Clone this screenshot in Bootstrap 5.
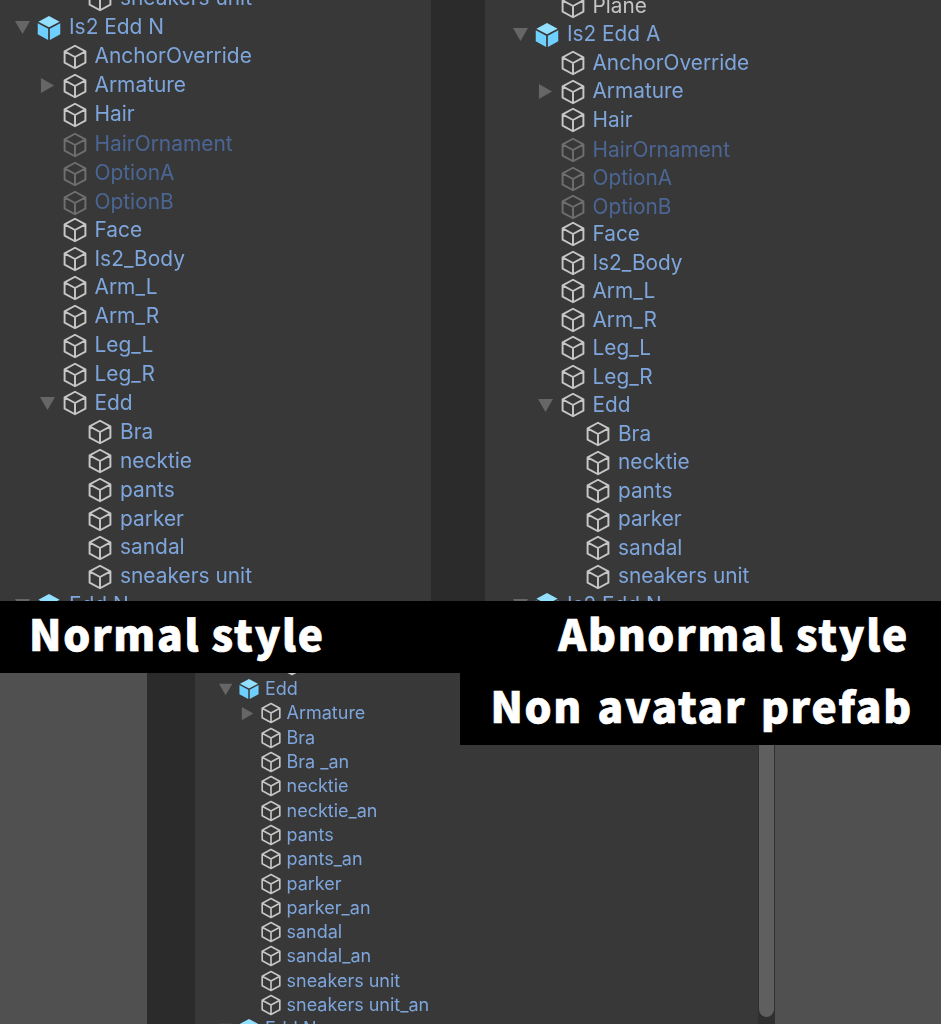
<!DOCTYPE html>
<html lang="en">
  <head>
    <meta charset="UTF-8" />
    <meta name="viewport" content="width=device-width, initial-scale=1.0" />
    <title>Hierarchy styles</title>
    <link href="https://cdn.jsdelivr.net/npm/bootstrap@5.3.0/dist/css/bootstrap.min.css" rel="stylesheet" />
    <style>
      body { background: #505050; overflow: hidden; }
      .sheet { width: 941px; height: 1024px; overflow: hidden; }
      .top-part { height: 601px; }
      .bottom-part { height: 351px; }
      .caption-band { height: 72px; background: #000; }
      .caption-text {
        font-family: "Noto Sans CJK JP", "Noto Sans", sans-serif;
        font-weight: 900; font-size: 42.5px; line-height: 64px;
        letter-spacing: 1.7px; color: #fff; white-space: nowrap;
        -webkit-text-stroke: 0.7px #fff;
      }
      .caption-left { padding-left: 29px; }
      .caption-right { padding-right: 32px; }
      .float-caption { position: absolute; top: 673px; left: 460px; width: 481px; height: 72px; background: #000; padding-right: 28px; word-spacing: 3px; }
      .pane { background: #383838; overflow: hidden; font-family: Inter, "Liberation Sans", sans-serif; }
      .pane-left { width: 431px; --start: 11px; --first: -15.5px; --row: 28.9px; --indent: 25.5px; --cube: 26px; --arrow: 25px; --gap: 7px; --fs: 20.9px; }
      .pane-right { width: 456px; --start: 24px; --first: -8px; --row: 28.53px; --indent: 25.5px; --cube: 26px; --arrow: 25px; --gap: 7px; --fs: 20.8px; }
      .pane-bottom { width: 563px; --start: 21px; --first: -20.3px; --row: 24.3px; --indent: 21.5px; --cube: 22px; --arrow: 22px; --gap: 5px; --fs: 18px; }
      .gutter-a { width: 54px; background: #2b2b2b; }
      .gutter-b { width: 48px; background: #2b2b2b; }
      .side-a { width: 147px; background: #505050; }
      .side-b { width: 166px; background: #505050; }
      .scroll-track { width: 17px; background: #2f2f2f; padding: 0 1px; }
      .scroll-thumb { height: 344px; background: #5f5f5f; border-radius: 0 0 8px 8px; }
      .tree { margin-top: var(--first); filter: blur(0.45px); }
      .tree-row {
        height: var(--row);
        padding-left: calc(var(--start) + var(--depth) * var(--indent));
        color: #7ea6dc; font-size: var(--fs); line-height: 1; white-space: nowrap;
      }
      .tree-row.off { color: #4b6695; padding-top: 3px; }
      .tree-row.plain { color: #c4c4c4; }
      .arrow-slot { width: var(--arrow); flex: none; }
      .tree-arrow { display: block; width: 60%; margin-left: 14%; }
      .cube-icon { width: var(--cube); height: var(--cube); flex: none; margin-right: var(--gap); }
    </style>
  </head>
  <body>
    <svg width="0" height="0" class="d-block">
      <symbol id="cube" viewBox="0 0 24 24">
        <path d="M12 1.6 21.6 6.8V17.2L12 22.4 2.4 17.2V6.8ZM2.4 6.8 12 12 21.6 6.8M12 12V22.4" fill="none" stroke="currentColor" stroke-width="1.8" stroke-linejoin="round" />
      </symbol>
      <symbol id="cube-root" viewBox="0 0 24 24">
        <path d="M12 1 21.8 6.3 12 11.4 2.2 6.3Z" fill="#93dfff" />
        <path d="M1.6 7.6 11.2 12.7V23L1.6 17.8Z" fill="#6fd0ff" />
        <path d="M22.4 7.6 12.8 12.7V23L22.4 17.8Z" fill="#6fd0ff" />
      </symbol>
      <symbol id="tri-down" viewBox="0 0 16 14"><path d="M0 0H16L8 14Z" fill="#666" /></symbol>
      <symbol id="tri-right" viewBox="0 0 14 16"><path d="M0 0V16L14 8Z" fill="#666" /></symbol>
    </svg>

    <div class="sheet position-relative">
      <div class="top-part d-flex">
        <div class="pane pane-left"><div class="tree" id="treeLeft"></div></div>
        <div class="gutter-a"></div>
        <div class="pane pane-right flex-grow-1"><div class="tree" id="treeRight"></div></div>
      </div>

      <div class="caption-band d-flex justify-content-between">
        <div class="caption-text caption-left">Normal style</div>
        <div class="caption-text caption-right">Abnormal style</div>
      </div>

      <div class="bottom-part d-flex">
        <div class="side-a"></div>
        <div class="gutter-b"></div>
        <div class="pane pane-bottom"><div class="tree" id="treeBottom"></div></div>
        <div class="scroll-track"><div class="scroll-thumb"></div></div>
        <div class="side-b"></div>
      </div>

      <div class="float-caption d-flex justify-content-end">
        <div class="caption-text">Non avatar prefab</div>
      </div>
    </div>

    <script>
      // [depth, name, arrow, kind]
      const body = [
        [1, "AnchorOverride"], [1, "Armature", "r"], [1, "Hair"],
        [1, "HairOrnament", "", "off"], [1, "OptionA", "", "off"], [1, "OptionB", "", "off"],
        [1, "Face"], [1, "Is2_Body"], [1, "Arm_L"], [1, "Arm_R"], [1, "Leg_L"], [1, "Leg_R"],
        [1, "Edd", "d"], [2, "Bra"], [2, "necktie"], [2, "pants"], [2, "parker"], [2, "sandal"], [2, "sneakers unit"],
      ];
      const treeLeft = [[2, "sneakers unit"], [0, "Is2 Edd N", "d", "root"], ...body, [0, "Edd N", "d", "root"]];
      const treeRight = [[1, "Plane", "", "plain"], [0, "Is2 Edd A", "d", "root"], ...body, [0, "Is2 Edd N", "d", "root"]];
      const treeBottom = [
        [2, ""], [0, "Edd", "d", "root"], [1, "Armature", "r"], [1, "Bra"], [1, "Bra _an"],
        [1, "necktie"], [1, "necktie_an"], [1, "pants"], [1, "pants_an"], [1, "parker"], [1, "parker_an"],
        [1, "sandal"], [1, "sandal_an"], [1, "sneakers unit"], [1, "sneakers unit_an"], [0, "Edd N", "d", "root"],
      ];
      const renderTree = (id, rows) => {
        document.getElementById(id).innerHTML = rows.map(([depth, name, arrow, kind]) => {
          const tri = arrow ? `<svg class="tree-arrow" viewBox="0 0 16 16"><use href="#tri-${arrow === "d" ? "down" : "right"}" /></svg>` : "";
          const icon = kind === "root" ? "cube-root" : "cube";
          const tone = kind === "off" ? "#6e6e6e" : "#c6c6c6";
          return `<div class="tree-row d-flex align-items-center ${kind || ""}" style="--depth:${depth}">
                    <span class="arrow-slot">${tri}</span>
                    <svg class="cube-icon" style="color:${tone}"><use href="#${icon}" /></svg>
                    <span>${name}</span>
                  </div>`;
        }).join("");
      };
      renderTree("treeLeft", treeLeft);
      renderTree("treeRight", treeRight);
      renderTree("treeBottom", treeBottom);
    </script>
    <script src="https://cdn.jsdelivr.net/npm/bootstrap@5.3.0/dist/js/bootstrap.bundle.min.js"></script>
  </body>
</html>
